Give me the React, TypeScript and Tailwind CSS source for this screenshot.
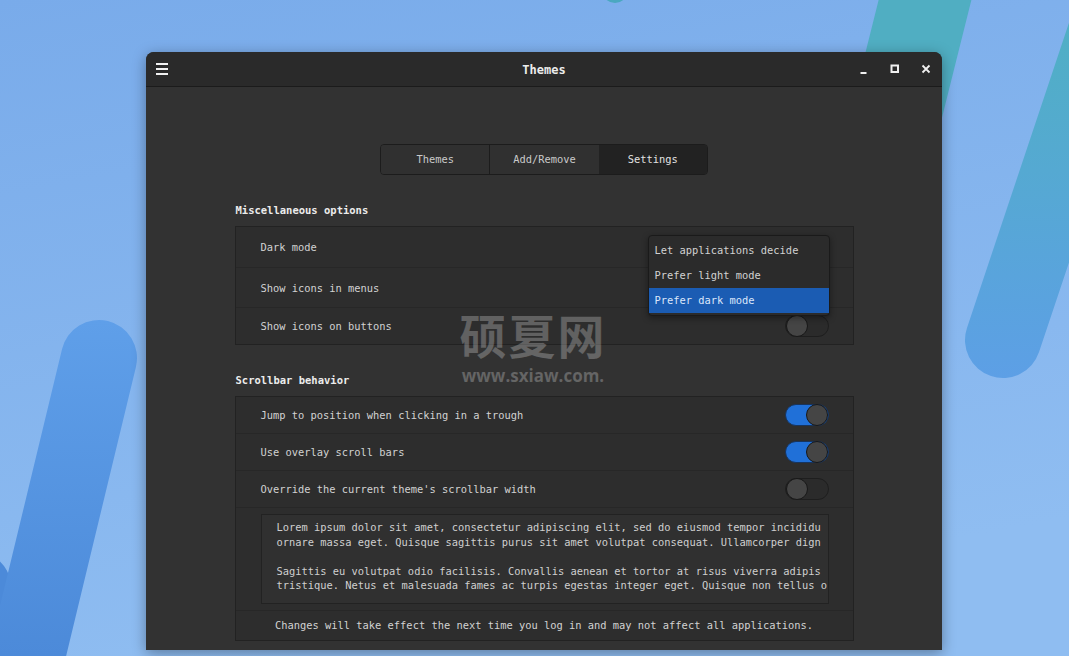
import React from 'react'

const mono = "font-['DejaVu_Sans_Mono','Liberation_Mono',monospace]"

function Toggle({ on }: { on: boolean }) {
  return (
    <div
      className={
        on
          ? 'flex h-[22px] w-[44px] items-center justify-end rounded-full border border-[#17345e] bg-[#2070d8]'
          : 'flex h-[22px] w-[44px] items-center justify-start rounded-full border border-[#1e1e1e] bg-[#2b2b2b]'
      }
    >
      <div className="h-[22px] w-[22px] rounded-full border border-[#181818] bg-[#454545]" />
    </div>
  )
}

function Row({ label, on, h = 'h-[37px]', last }: { label: string; on?: boolean; h?: string; last?: boolean }) {
  return (
    <div className={`flex ${h} items-center justify-between pl-[25px] pr-[24px] ${last ? '' : 'border-b border-[#272727]'}`}>
      <span className="pt-[2px]">{label}</span>
      {on !== undefined && <Toggle on={on} />}
    </div>
  )
}

function Wallpaper() {
  return (
    <svg className="absolute inset-0" width="1069" height="656" viewBox="0 0 1069 656">
      <defs>
        <linearGradient id="bg" x1="0" y1="0" x2="0.3" y2="1">
          <stop offset="0" stopColor="#79abea" />
          <stop offset="1" stopColor="#8fbdf1" />
        </linearGradient>
        <linearGradient id="leftPill" gradientUnits="userSpaceOnUse" x1="0" y1="320" x2="0" y2="656">
          <stop offset="0" stopColor="#5f9fe9" />
          <stop offset="1" stopColor="#4c8ad9" />
        </linearGradient>
        <linearGradient id="rightPill" gradientUnits="userSpaceOnUse" x1="0" y1="0" x2="0" y2="380">
          <stop offset="0" stopColor="#4fb0c2" />
          <stop offset="0.45" stopColor="#55a9d2" />
          <stop offset="1" stopColor="#5d9fe6" />
        </linearGradient>
      </defs>
      <rect width="1069" height="656" fill="url(#bg)" />
      <circle cx="615" cy="-10" r="13" fill="#4aa8c0" />
      <line x1="935" y1="-40" x2="820" y2="420" stroke="#50aec2" strokeWidth="90" strokeLinecap="round" />
      <line x1="1130" y1="-40" x2="1003" y2="340" stroke="url(#rightPill)" strokeWidth="76" strokeLinecap="round" />
      <line x1="-28" y1="590" x2="-70" y2="740" stroke="#4c8ad9" strokeWidth="80" strokeLinecap="round" />
      <line x1="99" y1="358" x2="14" y2="710" stroke="url(#leftPill)" strokeWidth="76" strokeLinecap="round" />
    </svg>
  )
}

export default function App() {
  return (
    <div className={`relative h-[656px] w-[1069px] overflow-hidden ${mono}`}>
      <Wallpaper />

      {/* Window */}
      <div className="absolute left-[146px] top-[52px] flex h-[598px] w-[796px] flex-col rounded-t-[8px] bg-[#323232] text-[10.4px] text-[#d2d2d2] shadow-[0_3px_14px_rgba(0,0,0,0.35)]">
        {/* Titlebar */}
        <div className="relative flex h-[35px] shrink-0 items-center justify-center rounded-t-[8px] border-b border-[#1b1b1b] bg-[#2a2a2a]">
          <div className="absolute left-[10px] top-[11px] flex flex-col gap-[3px]">
            <div className="h-[2px] w-[12px] bg-[#f0f0f0]" />
            <div className="h-[2px] w-[12px] bg-[#f0f0f0]" />
            <div className="h-[2px] w-[12px] bg-[#f0f0f0]" />
          </div>
          <span className="pt-[1px] text-[12px] font-bold text-[#ececec]">Themes</span>
          <div className="absolute right-[11px] top-[12px] flex items-center gap-[21px]">
            <svg width="10" height="10" viewBox="0 0 10 10">
              <rect x="1.5" y="8" width="6" height="2" fill="#f0f0f0" />
            </svg>
            <svg width="10" height="10" viewBox="0 0 10 10">
              <rect x="1.5" y="1.5" width="6.5" height="6.5" fill="none" stroke="#f0f0f0" strokeWidth="2" />
            </svg>
            <svg width="10" height="10" viewBox="0 0 10 10">
              <path d="M1.5 1.5 L8.5 8.5 M8.5 1.5 L1.5 8.5" stroke="#f0f0f0" strokeWidth="1.8" />
            </svg>
          </div>
        </div>

        {/* Content */}
        <div className="flex flex-col items-center">
          {/* Tabs */}
          <div className="mt-[57px] flex h-[31px] w-[328px] overflow-hidden rounded-[4px] border border-[#1c1c1c] text-[#cacaca]">
            <div className="flex flex-1 items-center justify-center border-r border-[#1c1c1c] bg-[#303030]">Themes</div>
            <div className="flex flex-1 items-center justify-center bg-[#303030]">Add/Remove</div>
            <div className="flex flex-1 items-center justify-center bg-[#222222] text-[#e2e2e2]">Settings</div>
          </div>

          <div className="mt-[27px] w-[619px]">
            <div className="pl-[1px] text-[10.5px] font-bold leading-[16px] text-[#ececec]">Miscellaneous options</div>
            <div className="relative mt-[8px] border border-[#222222] bg-[#2d2d2d]">
              <Row label="Dark mode" h="h-[41px]" />
              <Row label="Show icons in menus" on={false} h="h-[40px]" />
              <Row label="Show icons on buttons" on={false} h="h-[36px]" last />

              {/* Dropdown popover */}
              <div className="absolute right-[23px] top-[8px] w-[182px] rounded-[4px] border border-[#1a1a1a] bg-[#2b2b2b] py-[2px] shadow-[0_2px_6px_rgba(0,0,0,0.4)]">
                <div className="flex h-[25px] items-center pl-[6px] pt-[1px]">Let applications decide</div>
                <div className="flex h-[25px] items-center pl-[6px] pt-[1px]">Prefer light mode</div>
                <div className="flex h-[25px] items-center bg-[#1b5cb3] pl-[6px] pt-[1px] text-[#dbe7fb]">Prefer dark mode</div>
              </div>
            </div>

            <div className="mt-[27px] pl-[1px] text-[10.5px] font-bold leading-[16px] text-[#ececec]">Scrollbar behavior</div>
            <div className="mt-[8px] border border-[#222222] bg-[#2d2d2d]">
              <Row label="Jump to position when clicking in a trough" on />
              <Row label="Use overlay scroll bars" on />
              <Row label="Override the current theme's scrollbar width" on={false} />
              <div className="border-b border-[#272727] py-[6px] pl-[25px] pr-[24px]">
                <div className="h-[90px] overflow-hidden whitespace-pre border border-[#222222] bg-[#303030] pl-[15px] pt-[5px] leading-[14.5px] text-[#cfcfcf]">
                  <div>Lorem ipsum dolor sit amet, consectetur adipiscing elit, sed do eiusmod tempor incididu</div>
                  <div>ornare massa eget. Quisque sagittis purus sit amet volutpat consequat. Ullamcorper dign</div>
                  <div>&nbsp;</div>
                  <div>Sagittis eu volutpat odio facilisis. Convallis aenean et tortor at risus viverra adipis</div>
                  <div>tristique. Netus et malesuada fames ac turpis egestas integer eget. Quisque non tellus o</div>
                </div>
              </div>
              <div className="flex h-[29px] items-center justify-center">
                Changes will take effect the next time you log in and may not affect all applications.
              </div>
            </div>
          </div>
        </div>
      </div>

      {/* Watermark */}
      <div className="pointer-events-none absolute left-[458px] top-[310px] flex w-[150px] flex-col items-center gap-[8px] font-['Noto_Sans_CJK_SC',sans-serif] font-bold text-white/25">
        <div className="text-[47px] leading-[48px] tracking-[2px]">硕夏网</div>
        <div className="font-['Open_Sans',sans-serif] text-[17px] leading-[20px]">www.sxiaw.com.</div>
      </div>
    </div>
  )
}
